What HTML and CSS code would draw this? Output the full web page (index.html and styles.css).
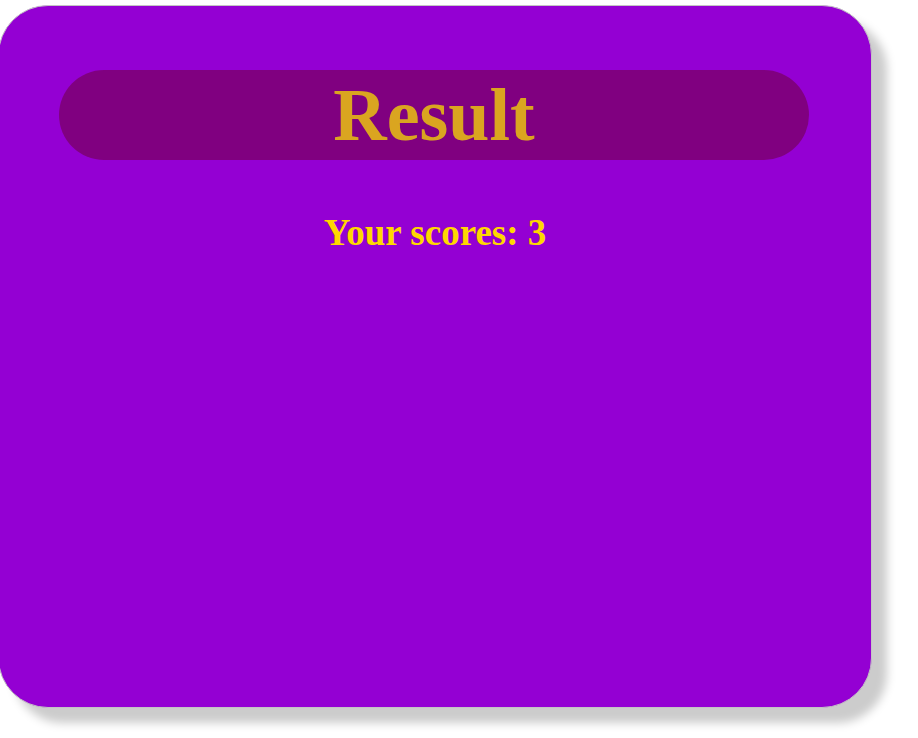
FILE: index.html
```html
<!DOCTYPE html>
<html>
<head>
<meta charset="utf-8">
<link rel="stylesheet" href="styles.css">
</head>
<body>
<div class="card">
  <div class="banner"><h1 class="title">Result</h1></div>
  <p class="score">Your scores: 3</p>
</div>
</body>
</html>
```
FILE: styles.css
```css
html, body {
  margin: 0;
  padding: 0;
  background: #ffffff;
}
body {
  font-family: "Liberation Serif", "Times New Roman", serif;
  padding-bottom: 30px;
}
.card {
  box-sizing: border-box;
  width: 874px;
  height: 703px;
  margin: 5px 0 0 -2px;
  padding-top: 64px;
  background: #9400d3;
  border: 1px solid #c4c4c4;
  border-radius: 50px;
  box-shadow: 15px 15px 10px #cccccc;
  display: flex;
  flex-direction: column;
  align-items: stretch;
}
.banner {
  height: 90px;
  margin: 0 62px 0 60px;
  background: #800080;
  border-radius: 45px;
  display: flex;
  align-items: center;
  justify-content: center;
}
.title {
  margin: 0;
  font-size: 74px;
  line-height: 90px;
  font-weight: bold;
  color: #daa520;
}
.score {
  margin: 53px 0 0 0;
  font-size: 37px;
  line-height: 40px;
  font-weight: bold;
  color: #ffd700;
  text-align: center;
}
```
